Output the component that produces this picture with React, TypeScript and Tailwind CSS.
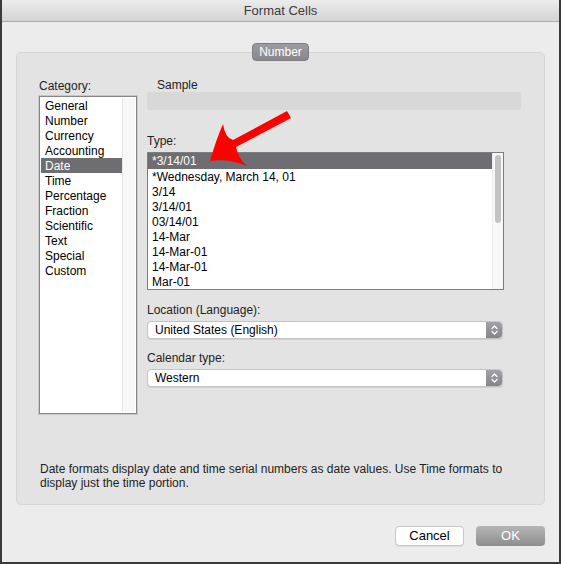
const CATEGORIES = [
  'General',
  'Number',
  'Currency',
  'Accounting',
  'Date',
  'Time',
  'Percentage',
  'Fraction',
  'Scientific',
  'Text',
  'Special',
  'Custom',
]

const TYPES = [
  '*3/14/01',
  '*Wednesday, March 14, 01',
  '3/14',
  '3/14/01',
  '03/14/01',
  '14-Mar',
  '14-Mar-01',
  '14-Mar-01',
  'Mar-01',
]

function Stepper(): JSX.Element {
  return (
    <div className="flex h-full w-[16px] items-center justify-center rounded-r-[4px] bg-gradient-to-b from-[#a2a2a6] to-[#85858a]">
      <svg width="9" height="14" viewBox="0 0 9 14" fill="none">
        <path d="M2 5.5 L4.5 3 L7 5.5" stroke="white" strokeWidth="1.2" strokeLinecap="round" strokeLinejoin="round" />
        <path d="M2 8.5 L4.5 11 L7 8.5" stroke="white" strokeWidth="1.2" strokeLinecap="round" strokeLinejoin="round" />
      </svg>
    </div>
  )
}

function Select({ value }: { value: string }): JSX.Element {
  return (
    <div className="flex h-[18px] w-[356px] items-center rounded-[4px] border border-[#c3c3c3] bg-white shadow-[0_1px_0_rgba(0,0,0,0.08)]">
      <span className="flex-1 pl-[7px] text-[12px] leading-[16px] text-black">{value}</span>
      <Stepper />
    </div>
  )
}

export default function App(): JSX.Element {
  return (
    <div className="relative flex h-[564px] w-[561px] flex-col border-x-2 border-b-2 border-[#3a3a3a] bg-[#ececec] font-['Liberation_Sans',Arial,sans-serif]">
      {/* Title bar */}
      <div className="flex h-[22px] shrink-0 items-center justify-center border-b border-[#acacac] bg-gradient-to-b from-[#ececec] to-[#d4d4d4] text-[13px] text-[#3c3c3c]">
        Format Cells
      </div>

      <div className="flex flex-1 flex-col px-[14px]">
        {/* Tab */}
        <div className="relative z-10 mt-[21px] flex h-[18px] w-[57px] items-center justify-center self-center rounded-[4px] border border-[#7f7f83] bg-gradient-to-b from-[#9d9da1] to-[#87878c] text-[12px] text-white">
          Number
        </div>

        {/* Group box */}
        <div className="-mt-[9px] flex h-[453px] flex-col rounded-[5px] border border-[#d6d6d6] bg-[#e3e3e3] pl-[22px]">
          <div className="flex gap-[10px]">
            {/* Category */}
            <div className="flex flex-col">
              <div className="mt-[26px] h-[14px] text-[12px] leading-[14px] text-[#1e1e1e]">Category:</div>
              <div className="mt-[3px] flex h-[318px] w-[98px] border border-[#868686] bg-white p-[1px] shadow-[0_0_0_1px_rgba(0,0,0,0.12)]">
                <div className="flex flex-1 flex-col">
                  {CATEGORIES.map((c) => (
                    <div
                      key={c}
                      className={
                        c === 'Date'
                          ? 'h-[15px] bg-[#6d6d72] pl-[4px] pt-[1px] text-[12px] leading-[15px] text-white'
                          : 'h-[15px] pl-[4px] pt-[1px] text-[12px] leading-[15px] text-black'
                      }
                    >
                      {c}
                    </div>
                  ))}
                </div>
                <div className="w-[13px] border-l border-[#e6e6e6] bg-[#f7f7f7]" />
              </div>
            </div>

            {/* Right side */}
            <div className="flex flex-col">
              <div className="mt-[25px] h-[14px] pl-[10px] text-[12px] leading-[14px] text-[#1e1e1e]">Sample</div>
              <div className="h-[18px] w-[374px] rounded-[3px] bg-[#d8d8d8]" />

              <div className="mt-[24px] h-[14px] text-[12px] leading-[14px] text-[#1e1e1e]">Type:</div>
              <div className="mt-[4px] flex h-[138px] w-[357px] border border-[#7d7d7d] bg-white">
                <div className="flex flex-1 flex-col">
                  {TYPES.map((t, i) => (
                    <div
                      key={i}
                      className={
                        i === 0
                          ? 'h-[16px] bg-[#6d6d72] pl-[4px] pt-[1px] text-[12px] leading-[15px] text-white'
                          : 'h-[15px] pl-[4px] pt-[1px] text-[12px] leading-[15px] text-black'
                      }
                    >
                      {t}
                    </div>
                  ))}
                </div>
                <div className="flex w-[11px] justify-center border-l border-[#ececec] bg-[#f8f8f8] pt-[2px]">
                  <div className="h-[68px] w-[6px] rounded-full bg-[#c2c2c2]" />
                </div>
              </div>

              <div className="mt-[13px] h-[14px] text-[12px] leading-[14px] text-[#1e1e1e]">Location (Language):</div>
              <div className="mt-[4px]">
                <Select value="United States (English)" />
              </div>

              <div className="mt-[12px] h-[14px] text-[12px] leading-[14px] text-[#1e1e1e]">Calendar type:</div>
              <div className="mt-[4px]">
                <Select value="Western" />
              </div>
            </div>
          </div>

          <p className="mt-auto pb-[14px] pl-[1px] text-[12px] leading-[14px] text-[#1e1e1e]">
            Date formats display date and time serial numbers as date values. Use Time formats to
            <br />
            display just the time portion.
          </p>
        </div>

        {/* Buttons */}
        <div className="mt-[21px] flex justify-end gap-[12px]">
          <button className="h-[20px] w-[69px] rounded-[4px] border border-[#c6c6c6] bg-white text-[13px] leading-[18px] text-black shadow-[0_1px_0_rgba(0,0,0,0.06)]">
            Cancel
          </button>
          <button className="h-[20px] w-[69px] rounded-[4px] bg-gradient-to-b from-[#b6b6b6] to-[#8e8e8e] text-[13px] leading-[20px] text-white">
            OK
          </button>
        </div>
      </div>

      {/* Red annotation arrow */}
      <svg className="pointer-events-none absolute left-0 top-0" width="561" height="564" viewBox="0 0 561 564">
        <path
          d="M208 161 Q214 140 221 124 Q223 138 231 140 L285 111 L289 118 L234 147 Q236 158 245 166 Q226 158 208 161 Z"
          fill="#ff0000"
        />
      </svg>
    </div>
  )
}
